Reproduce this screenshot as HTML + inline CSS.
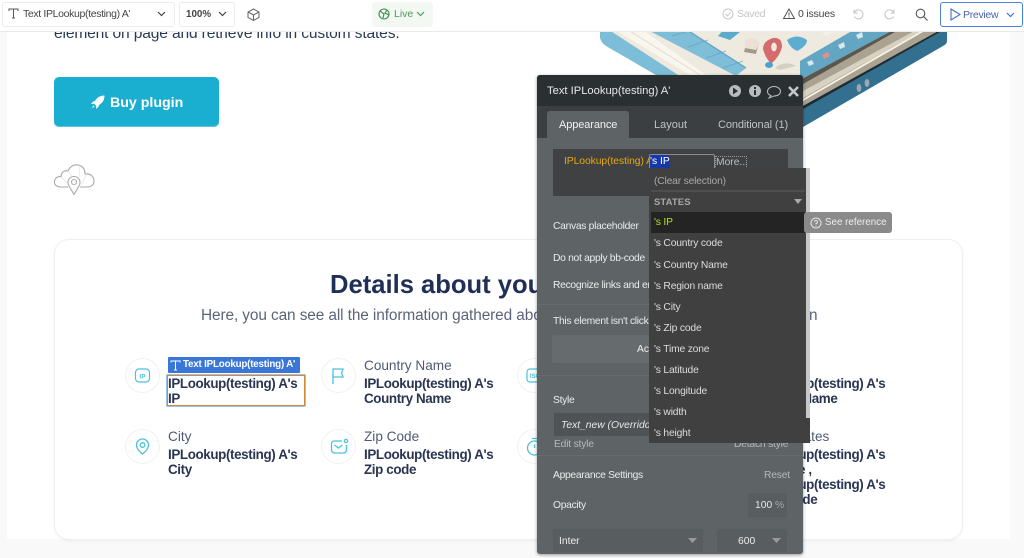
<!DOCTYPE html>
<html><head><meta charset="utf-8"><style>
html,body{margin:0;padding:0}
body{width:1024px;height:558px;overflow:hidden;position:relative;background:#f9f9f9;font-family:"Liberation Sans",sans-serif;color:#1f2a4d}
.a{position:absolute;white-space:nowrap}
.i{position:absolute;width:33px;height:33px;border:1px solid #f0f1f3;border-radius:50%;background:#fff}
.i svg{position:absolute;left:0;top:0}
.l{position:absolute;font-size:13.6px;color:#4f5a73;white-space:nowrap;line-height:17px}
.v{position:absolute;font-size:13.4px;letter-spacing:-.38px;font-weight:700;line-height:15px;color:#2a3553;white-space:nowrap}
.tb{font-size:10.5px;color:#444}
.p{color:#e9ecec;font-size:10.3px;letter-spacing:-.3px}
.m{position:absolute;left:654px;font-size:10.3px;letter-spacing:-.18px;color:#dcdcdc;white-space:nowrap}
</style></head><body>
<div class="a" style="left:7px;top:0;width:1003px;height:539px;background:#fff"></div>
<div class="a" style="left:54px;top:24px;font-size:15.6px;letter-spacing:-.16px;color:#2b3a55;line-height:20px">element on page and retrieve info in custom states.</div>

<svg class="a" style="left:590px;top:25px" width="380" height="110" viewBox="590 25 380 110">
<path d="M600 28H947V41Q947 44 943 46L803 127 790 135 660 75 606 45Q600 41 600 36Z" fill="#33708f"/>
<path d="M600 28H606L678 75H656L606 46Q600 42 600 36Z" fill="#7cbdd7"/>
<path d="M606 28H944L803 106 780 112 678 75Z" fill="#aba291"/>
<path d="M606 28H897L803 80 790 85 678 75Z" fill="#efeadf"/>
<path d="M612 28H640L706 75H690Z" fill="#f9f6ee"/>
<path d="M625 28L700 75" stroke="#e2ddd0" fill="none"/>
<path d="M644 28H684L746 68 736 76Z" fill="#7fbed8"/>
<path d="M684 28L746 68" stroke="#6aa9c6" stroke-width="1.500" fill="none"/>
<path d="M672 36L692 30M688 47L708 40M706 58L726 51M723 68L743 61" stroke="#5f9fbe" stroke-width="1" fill="none" opacity=".6"/>
<path d="M800 61L857 28H897L800 80Z" fill="#62a6c4"/>
<path d="M800 80L897 28H902L803 84Z" fill="#5a574e"/>
<path d="M803 91L920 28H926L803 98Z" fill="#d8d2c3"/>
<path d="M803 99L926 28H930L803 101Z" fill="#f6f2e8"/>
<path d="M803 106L944 28H947L803 109Z" fill="#1d2a30"/>
<path d="M725 28H745L730 40 718 36Z" fill="#5ba9cc"/>
<path d="M745 40Q755 35 760 44L756 50 745 48Z" fill="#ecdfd6"/>
<path d="M745 48L756 50 758 46 756 54 744 52Z" fill="#a29a8c"/>
<path d="M755 28H775L770 31 762 33Z" fill="#e9e2d4"/>
<path d="M775 68Q785 60 796 66L780 70Z" fill="#d5cfc1"/>
<path d="M773 38Q782 37 782 47 780 56 771 64 765 57 763 49 763 41 773 38Z" fill="#d46c6c"/>
<ellipse cx="774" cy="47" rx="2.800" ry="4.500" fill="#efe9e0"/>
<ellipse cx="769" cy="65" rx="4" ry="3" fill="#4aa3cf"/>
<path d="M787 40Q797 33 807 40 807 46 797 51 790 48 787 40Z" fill="#5dadd0"/>
<path d="M820 30H838L826 36Z" fill="#f6f1e6"/>
<ellipse cx="859" cy="88" rx="2.400" ry="4" fill="#9aa7ad"/>
<ellipse cx="867" cy="83" rx="2.400" ry="4" fill="#9aa7ad"/>
<path d="M822 55L828 52 830 56 824 59Z" fill="#e58f8a"/>
<path d="M807 62L812 60 814 64 809 66ZM838 45L844 42 845 47 840 49ZM856 35L862 32 863 37 858 39Z" fill="#d8e8ee"/>
</svg>

<div class="a" style="left:54px;top:77px;width:165px;height:50px;background:#1aaed0;border-radius:5px;box-shadow:inset 0 -1px 0 #5cc6de"></div>
<svg class="a" style="left:91px;top:95px" width="14" height="14" viewBox="0 0 14 14"><path d="M13.5.5C9 .5 6 2.500 4 6L2 6.500 0 9l3-.2 2.300 2.300L5 14l2.500-2 .5-2c3.500-2 5.500-5 5.500-9.500zM2.500 10.500L.5 13.500l3-2z" fill="#fff"/></svg>
<div class="a" style="left:110px;top:94px;font-size:14.2px;font-weight:700;color:#fff;line-height:18px">Buy plugin</div>

<svg class="a" style="left:53px;top:163px" width="42" height="33" viewBox="0 0 42 33" fill="none" stroke="#a9a9a9" stroke-width="1.100">
<path d="M15 24H8C3 24 1 21 1.500 18 2 15 5 13 8 13.500 8 9 12 7 15 8 17 3 22 .5 27 2.500 31 4 32 8 32 11 37 10 41 13.500 41 18 41 22 38 24 34 24H27"/>
<path d="M21 31.500C18 26 15 23 15 19.500A6 6 0 0 1 27 19.500C27 23 24 26 21 31.500Z"/><circle cx="21" cy="19" r="2.500"/>
<path d="M8 14L15 21M15 8L19 13M27 3L26 14M33 12L28 22" stroke="#e2e2e2" stroke-width=".7"/></svg>

<div class="a" style="left:54px;top:239px;width:907px;height:299px;background:#fff;border:1px solid #efefef;border-radius:15px;box-shadow:0 1px 3px rgba(0,0,0,.05)"></div>
<div class="a" style="left:330px;top:269px;font-size:25.6px;font-weight:700;line-height:32px;color:#1f2f57">Details about your IP</div>
<div class="a" style="left:201px;top:306px;font-size:15.4px;letter-spacing:-.1px;line-height:20px;color:#5b6479">Here, you can see all the information gathered about the visitor's location</div>
<div class="a" style="left:809px;top:306px;font-size:15.4px;line-height:20px;color:#5b6479">n</div>

<div class="i" style="left:125px;top:358px"><svg width="33" height="33" fill="none" stroke="#4cc1de" stroke-width="1.200"><rect x="9.500" y="10" width="14" height="13" rx="3.500"/><text x="16.500" y="19.500" font-size="6.500" font-weight="700" fill="#4cc1de" stroke="none" text-anchor="middle" font-family="Liberation Sans">IP</text></svg></div>
<div class="i" style="left:321px;top:358px"><svg width="33" height="33" fill="none" stroke="#4cc1de" stroke-width="1.300"><path d="M11 25V10H21L19.500 14 21 18H11"/></svg></div>
<div class="i" style="left:517px;top:358px"><svg width="33" height="33" fill="none" stroke="#4cc1de" stroke-width="1.200"><rect x="9" y="10" width="16" height="13" rx="3"/><text x="17" y="19" font-size="6" font-weight="700" fill="#4cc1de" stroke="none" text-anchor="middle" font-family="Liberation Sans">ISO</text></svg></div>
<div class="i" style="left:125px;top:429px"><svg width="33" height="33" fill="none" stroke="#4cc1de" stroke-width="1.300"><path d="M16.500 24C12.500 20.500 10.500 18.500 10.500 15A6 6 0 0 1 22.500 15C22.500 18.500 20.500 20.500 16.500 24Z"/><circle cx="16.500" cy="15" r="2.300"/></svg></div>
<div class="i" style="left:321px;top:429px"><svg width="33" height="33" fill="none" stroke="#4cc1de" stroke-width="1.300"><path d="M20 11H12A3 3 0 0 0 9.500 14V20A3 3 0 0 0 12.500 23H21.500A3 3 0 0 0 24.500 20V15M12.500 15L16.500 18 20.500 15"/><circle cx="24" cy="11" r="1.600"/></svg></div>
<div class="i" style="left:517px;top:429px"><svg width="33" height="33" fill="none" stroke="#4cc1de" stroke-width="1.300"><circle cx="16.500" cy="18" r="7"/><path d="M16.500 14.500V18M14 8.500H19"/></svg></div>

<div class="a" style="left:168px;top:357px;width:132px;height:16px;background:#3a76d8;color:#fff;font-size:9.800px;letter-spacing:-.2px;font-weight:700;line-height:16px;text-indent:15px;border-radius:1px">Text IPLookup(testing) A'</div>
<svg class="a" style="left:170px;top:360px" width="11" height="11" fill="none" stroke="#fff" stroke-width="1"><path d="M1 2.500V1H10V2.500M5.500 1V10M4 10H7"/></svg>
<div class="a" style="left:167px;top:375px;width:136px;height:29px;border:1px solid #d08a3a;box-shadow:0 0 0 .5px #3a86d8"></div>

<div class="v" style="left:168px;top:376px">IPLookup(testing) A's<br>IP</div>
<div class="l" style="left:364px;top:357px">Country Name</div>
<div class="v" style="left:364px;top:376px">IPLookup(testing) A's<br>Country Name</div>
<div class="l" style="left:168px;top:428px">City</div>
<div class="v" style="left:168px;top:447px">IPLookup(testing) A's<br>City</div>
<div class="l" style="left:364px;top:428px">Zip Code</div>
<div class="v" style="left:364px;top:447px">IPLookup(testing) A's<br>Zip code</div>
<div class="v" style="left:756px;top:376px">IPLookup(testing) A's<br>Region Name</div>
<div class="l" style="left:756px;top:428px">Coordinates</div>
<div class="v" style="left:756px;top:447px">IPLookup(testing) A's<br>Latitude ,<br>IPLookup(testing) A's<br>Longitude</div>

<!-- top bar -->
<div class="a" style="left:0;top:0;width:1024px;height:31px;background:#fff;border-bottom:1px solid #e9e9e9"></div>
<div class="a" style="left:2px;top:2px;width:171px;height:23px;border:1px solid #ececec;border-radius:3px"></div>
<svg class="a" style="left:8px;top:8px" width="11" height="11" fill="none" stroke="#555" stroke-width="1"><path d="M1 3V1H10V3M5.500 1V10M4 10H7"/></svg>
<div class="a tb" style="left:23px;top:7px;line-height:14px;letter-spacing:-.35px">Text IPLookup(testing) A'</div>
<svg class="a" style="left:157px;top:11px" width="9" height="6" fill="none" stroke="#444" stroke-width="1.200"><path d="M1 1L4.500 4.500 8 1"/></svg>
<div class="a" style="left:179px;top:2px;width:54px;height:23px;border:1px solid #ececec;border-radius:3px"></div>
<div class="a tb" style="left:186px;top:8px;font-weight:700;line-height:14px;font-size:9.800px">100%</div>
<svg class="a" style="left:218px;top:11px" width="9" height="6" fill="none" stroke="#444" stroke-width="1.200"><path d="M1 1L4.500 4.500 8 1"/></svg>
<svg class="a" style="left:247px;top:8px" width="13" height="13" fill="none" stroke="#666" stroke-width="1"><path d="M6.500 1L12 4V9.500L6.500 12.500 1 9.500V4ZM1 4L6.500 7 12 4M6.500 7V12.500"/></svg>
<div class="a" style="left:372px;top:2px;width:61px;height:25px;background:#f3f8f3;border-radius:3px"></div>
<svg class="a" style="left:378px;top:8px" width="12" height="12" fill="none" stroke="#3c8c4c" stroke-width="1.100"><circle cx="6" cy="6" r="5"/><path d="M2 3L6 6 5 10M9 2L7 5 11 7"/></svg>
<div class="a" style="left:394px;top:7px;font-size:10.500px;color:#4c9a5c;line-height:14px">Live</div>
<svg class="a" style="left:416px;top:11px" width="9" height="6" fill="none" stroke="#4c9a5c" stroke-width="1.200"><path d="M1 1L4.500 4.500 8 1"/></svg>

<svg class="a" style="left:722px;top:8px" width="12" height="12" fill="none" stroke="#c9c9c9"><circle cx="6" cy="6" r="5"/><path d="M3.500 6L5.500 8 8.500 4.500"/></svg>
<div class="a" style="left:737px;top:7px;font-size:10.500px;letter-spacing:-.3px;color:#c4c4c4;line-height:14px">Saved</div>
<svg class="a" style="left:783px;top:8px" width="12" height="11" fill="none" stroke="#555"><path d="M6 1L11.500 10.500H.5ZM6 4.500V7.500M6 8.500V9.500"/></svg>
<div class="a tb" style="left:798px;top:7px;line-height:14px;letter-spacing:-.2px">0 issues</div>
<svg class="a" style="left:852px;top:8px" width="12" height="12" fill="none" stroke="#c4c4c4"><path d="M2 1.500V5H5.500M2.200 5A4.500 4.500 0 1 1 2.500 8.500"/></svg>
<svg class="a" style="left:884px;top:8px" width="12" height="12" fill="none" stroke="#c4c4c4"><path d="M10 1.500V5H6.500M9.800 5A4.500 4.500 0 1 0 9.500 8.500"/></svg>
<svg class="a" style="left:915px;top:8px" width="13" height="13" fill="none" stroke="#555" stroke-width="1.100"><circle cx="5.500" cy="5.500" r="4.300"/><path d="M8.700 8.700L12.500 12.500"/></svg>
<div class="a" style="left:940px;top:2px;width:81px;height:23px;border:1px solid #4d7fe0;border-radius:3px"></div>
<svg class="a" style="left:950px;top:8px" width="11" height="13" fill="none" stroke="#4070d0" stroke-width="1.100"><path d="M1 1L10 6.500 1 12Z"/></svg>
<div class="a" style="left:963px;top:8px;font-size:10.500px;letter-spacing:-.3px;color:#4a62a8;line-height:14px">Preview</div>
<svg class="a" style="left:1006px;top:12px" width="9" height="6" fill="none" stroke="#4070d0" stroke-width="1.200"><path d="M1 1L4.500 4.500 8 1"/></svg>

<!-- panel -->
<div class="a" style="left:537px;top:75px;width:266px;height:479px;background:#5e6466;border-radius:3px;box-shadow:0 1px 3px rgba(0,0,0,.4)"></div>
<div class="a" style="left:537px;top:75px;width:266px;height:31px;background:#2a2f32;border-radius:3px 3px 0 0"></div>
<div class="a" style="left:537px;top:106px;width:266px;height:32px;background:#3b3f42"></div>
<div class="a" style="left:547px;top:111px;width:82px;height:27px;background:#5e6466;border-radius:3px 3px 0 0"></div>
<div class="a" style="left:547px;top:84px;font-size:11.200px;color:#e6e8e8;line-height:15px">Text IPLookup(testing) A'</div>
<svg class="a" style="left:728px;top:84px" width="72" height="16"><circle cx="7" cy="7" r="6" fill="#b8bcbc"/><path d="M5 3.500L10 7 5 10.500Z" fill="#2a2f32"/><circle cx="27" cy="7" r="6" fill="#b8bcbc"/><rect x="26" y="6" width="2" height="5" fill="#2a2f32"/><rect x="26" y="3" width="2" height="2" fill="#2a2f32"/><path d="M46 2.500C42 2.500 39.500 5 39.500 7.500 39.500 9.500 41 11 43 11.500L41 14 46 12C50 12 52.500 10 52.500 7.500 52.500 5 50 2.500 46 2.500Z" fill="none" stroke="#b8bcbc"/><path d="M61 3L70 12M70 3L61 12" stroke="#c4c8c8" stroke-width="2.600"/></svg>
<div class="a" style="left:559px;top:118px;font-size:11px;color:#f0f0f0;line-height:15px;letter-spacing:-.1px">Appearance</div>
<div class="a" style="left:654px;top:118px;font-size:11px;color:#bfc2c3;line-height:15px">Layout</div>
<div class="a" style="left:718px;top:118px;font-size:11px;letter-spacing:-.1px;color:#bfc2c3;line-height:15px">Conditional (1)</div>

<div class="a" style="left:553px;top:149px;width:235px;height:47px;background:#3f4142"></div>
<div class="a" style="left:564px;top:155px;font-size:10.300px;color:#e8a90c;line-height:14px;letter-spacing:-.05px">IPLookup(testing) A</div>
<div class="a" style="left:649px;top:154px;width:64px;height:14px;border:1px solid #8a8d8e;border-radius:2px;background:#3f4142"></div>
<div class="a" style="left:650px;top:155px;height:14px;width:20px;background:#1638a8;color:#fff;font-size:10.300px;line-height:14px">'s IP</div>
<div class="a" style="left:715px;top:156px;height:11px;width:30px;border:1px dotted #9a9a9a;color:#bcbcbc;font-size:10.300px;line-height:11px">More...</div>

<div class="a p" style="left:553px;top:220px;line-height:14px">Canvas placeholder</div>
<div class="a p" style="left:553px;top:252px;line-height:14px">Do not apply bb-code</div>
<div class="a p" style="left:553px;top:279px;line-height:14px">Recognize links and emails</div>
<div class="a" style="left:537px;top:304px;width:266px;height:1px;background:#666b6d"></div>
<div class="a p" style="left:553px;top:315px;line-height:14px">This element isn't clickable</div>
<div class="a" style="left:552px;top:335px;width:235px;height:28px;background:#666b6d;border-radius:2px"></div>
<div class="a" style="left:637px;top:343px;font-size:10.300px;color:#eee;line-height:14px">Ac</div>
<div class="a" style="left:537px;top:375px;width:266px;height:1px;background:#666b6d"></div>
<div class="a p" style="left:553px;top:394px;line-height:14px">Style</div>
<div class="a" style="left:554px;top:413px;width:233px;height:23px;background:#4f5355"></div>
<div class="a" style="left:561px;top:419px;font-size:10.300px;font-style:italic;color:#e8e8e8;line-height:14px">Text_new (Overridden)</div>
<div class="a" style="left:554px;top:438px;font-size:10.300px;letter-spacing:-.2px;color:#b5b8b9;line-height:14px">Edit style</div>
<div class="a" style="left:734px;top:438px;font-size:10.300px;letter-spacing:-.2px;color:#b5b8b9;line-height:14px">Detach style</div>
<div class="a" style="left:537px;top:455px;width:266px;height:1px;background:#666b6d"></div>
<div class="a p" style="left:553px;top:469px;line-height:14px">Appearance Settings</div>
<div class="a" style="left:764px;top:469px;font-size:10.300px;letter-spacing:-.2px;color:#b5b8b9;line-height:14px">Reset</div>
<div class="a p" style="left:553px;top:499px;line-height:14px">Opacity</div>
<div class="a" style="left:748px;top:493px;width:39px;height:24px;background:#585d5f"></div>
<div class="a" style="left:755px;top:499px;font-size:10.300px;color:#e8e8e8;line-height:14px">100 <span style="color:#a5a9aa">%</span></div>
<div class="a" style="left:553px;top:529px;width:150px;height:23px;background:#585d5f"></div>
<div class="a" style="left:559px;top:535px;font-size:10.300px;color:#eee;line-height:14px">Inter</div>
<svg class="a" style="left:688px;top:538px" width="9" height="5"><path d="M0 0H9L4.500 5Z" fill="#999"/></svg>
<div class="a" style="left:717px;top:529px;width:70px;height:23px;background:#585d5f"></div>
<div class="a" style="left:738px;top:535px;font-size:10.300px;color:#eee;line-height:14px">600</div>
<svg class="a" style="left:772px;top:538px" width="9" height="5"><path d="M0 0H9L4.500 5Z" fill="#999"/></svg>

<!-- dropdown -->
<div class="a" style="left:806px;top:168px;width:4px;height:250px;background:#c8c8c8"></div>
<div class="a" style="left:649px;top:168px;width:157px;height:275px;background:#404040"></div>
<div class="a" style="left:806px;top:418px;width:4px;height:25px;background:#404040"></div>
<div class="m" style="left:654px;top:175px;color:#a8a8a8;line-height:14px">(Clear selection)</div>
<div class="a" style="left:651px;top:190px;width:154px;height:2px;background:#4e4e4e"></div>
<div class="a" style="left:654px;top:196px;font-size:9.500px;font-weight:700;color:#a8a8a8;line-height:13px;letter-spacing:.1px">STATES</div>
<svg class="a" style="left:794px;top:199px" width="8" height="5"><path d="M0 0H8L4 5Z" fill="#aaa"/></svg>
<div class="a" style="left:651px;top:212px;width:154px;height:21px;background:#242424"></div>
<div class="m" style="top:216px;color:#b4e01c;line-height:14px">'s IP</div>
<div class="m" style="top:237px;line-height:14px">'s Country code</div>
<div class="m" style="top:259px;line-height:14px">'s Country Name</div>
<div class="m" style="top:280px;line-height:14px">'s Region name</div>
<div class="m" style="top:301px;line-height:14px">'s City</div>
<div class="m" style="top:322px;line-height:14px">'s Zip code</div>
<div class="m" style="top:343px;line-height:14px">'s Time zone</div>
<div class="m" style="top:364px;line-height:14px">'s Latitude</div>
<div class="m" style="top:385px;line-height:14px">'s Longitude</div>
<div class="m" style="top:406px;line-height:14px">'s width</div>
<div class="m" style="top:427px;line-height:14px">'s height</div>
<div class="a" style="left:804px;top:212px;width:88px;height:21px;background:#8a8a8a;border-radius:3px"></div>
<svg class="a" style="left:810px;top:217px" width="12" height="12" fill="none" stroke="#e5e5e5"><circle cx="6" cy="6" r="5"/><path d="M4.500 4.800A1.500 1.500 0 1 1 6 6.500V7.500M6 8.500V9.500"/></svg>
<div class="a" style="left:825px;top:216px;font-size:9.800px;color:#eee;line-height:14px">See reference</div>
</body></html>
